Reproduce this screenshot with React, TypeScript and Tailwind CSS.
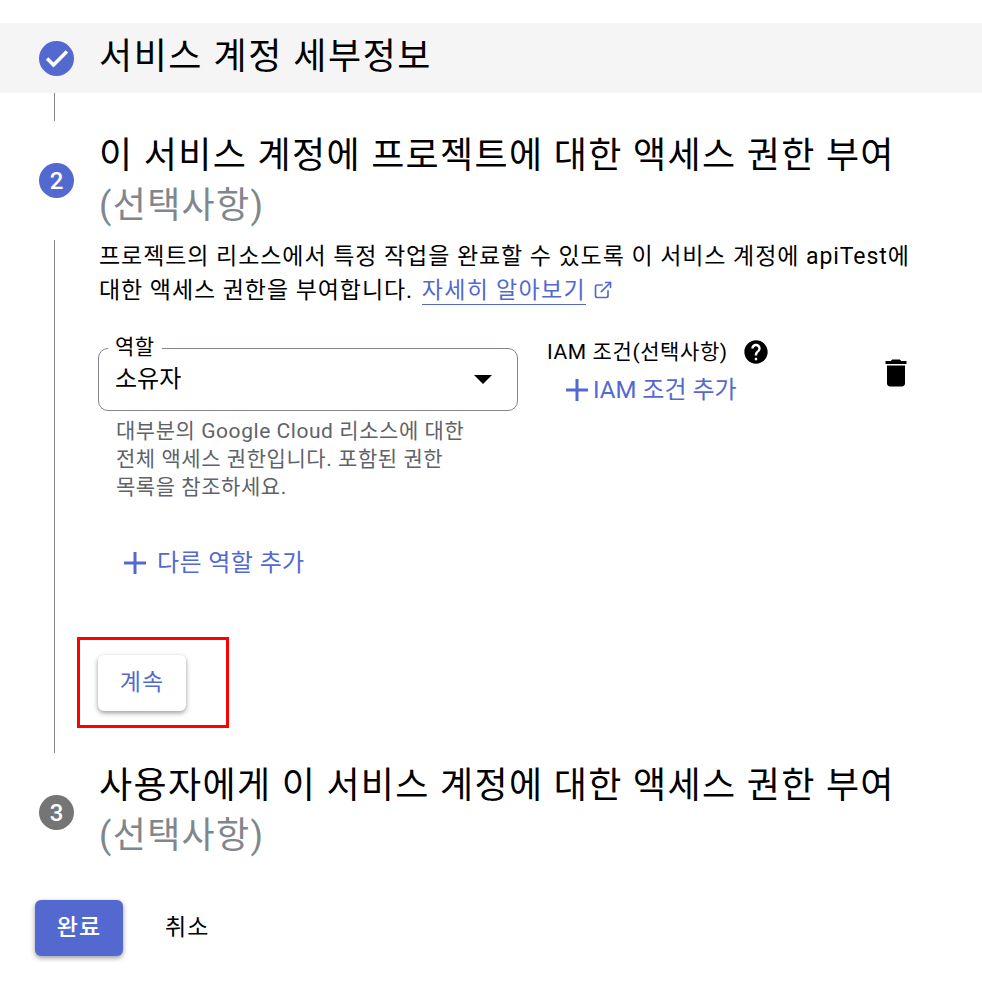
import { ExternalLink } from "lucide-react"

const FONT = "font-['Roboto','Noto_Sans_CJK_KR',sans-serif]"

function StepTitle({ title, optional, className = "" }: { title: string; optional?: boolean; className?: string }) {
  return (
    <div className={`text-[36px] leading-[50px] tracking-[1.35px] text-black ${className}`}>
      <div>{title}</div>
      {optional && <div className="text-[#80868b]">(선택사항)</div>}
    </div>
  )
}

function StepBadge({ color, children }: { color: string; children: React.ReactNode }) {
  return (
    <div className={`w-[35px] h-[35px] rounded-full flex items-center justify-center shrink-0 text-white text-[24px] font-medium ${color}`}>
      {children}
    </div>
  )
}

function PlusIcon({ className }: { className: string }) {
  return (
    <svg className={className} viewBox="0 0 24 24" fill="currentColor">
      <path d="M10.5 1h3v9.5H23v3h-9.5V23h-3v-9.5H1v-3h9.5z" />
    </svg>
  )
}

export default function App() {
  return (
    <div className={`w-[982px] h-[987px] overflow-hidden bg-white pt-[23px] ${FONT}`}>
      {/* Step 1 */}
      <div className="h-[70px] bg-[#f5f5f5] flex items-center pl-[39px] gap-[25px]">
        <StepBadge color="bg-[#5369d0]">
          <svg className="w-[28px] h-[28px]" viewBox="0 0 24 24" fill="none" stroke="white" strokeWidth="3">
            <path d="M3.5 12.5l5.5 5.5L20.5 6.5" />
          </svg>
        </StepBadge>
        <StepTitle title="서비스 계정 세부정보" className="-translate-y-[1px] tracking-[1.55px]" />
      </div>
      <div className="ml-[54px] w-px h-[28px] bg-[#80868b]" />

      {/* Step 2 */}
      <div className="flex items-center pl-[39px] gap-[25px] h-[119px]">
        <StepBadge color="bg-[#5369d0]">2</StepBadge>
        <StepTitle title="이 서비스 계정에 프로젝트에 대한 액세스 권한 부여" optional />
      </div>

      <div className="ml-[54px] border-l border-[#80868b] pl-[44px] h-[513px]">
        <p className="text-[23px] leading-[34px] tracking-[0.93px] text-black w-[830px]">
          프로젝트의 리소스에서 특정 작업을 완료할 수 있도록 이 서비스 계정에 apiTest에 대한 액세스 권한을 부여합니다.{" "}
          <a className="ml-[2px] text-[#5369d0] border-b border-[#5369d0] tracking-[1.3px]">자세히 알아보기</a>
          <ExternalLink className="inline-block w-[20px] h-[20px] ml-[7px] text-[#5369d0] align-[-2px]" />
        </p>

        <div className="flex mt-[40px]">
          <div className="w-[420px] -ml-[1px]">
            <div className="relative h-[63px] border border-[#80868b] rounded-[10px] flex items-center justify-between pl-[16px] pr-[25px]">
              <span className="absolute -top-[14px] left-[9px] bg-white px-[7px] text-[21px] leading-[24px] tracking-[0.5px] text-black">역할</span>
              <span className="text-[24px] leading-[30px] text-black -translate-y-[1px]">소유자</span>
              <div className="w-0 h-0 border-x-[9px] border-x-transparent border-t-[9px] border-t-black" />
            </div>
            <p className="mt-[6px] ml-[18px] w-[360px] break-keep text-[21px] leading-[28px] tracking-[0.55px] text-[#5f6368]">
              대부분의 Google Cloud 리소스에 대한 전체 액세스 권한입니다. 포함된 권한 목록을 참조하세요.
            </p>
          </div>

          <div className="ml-[29px] w-[300px] -mt-[10px]">
            <div className="flex items-center gap-[14px] text-[21px] leading-[24px] tracking-[0.6px] text-black">
              IAM 조건(선택사항)
              <svg className="w-[28px] h-[28px]" viewBox="0 0 24 24" fill="black">
                <path d="M12 2C6.48 2 2 6.48 2 12s4.48 10 10 10 10-4.48 10-10S17.52 2 12 2zm1 17h-2v-2h2v2zm2.07-7.75l-.9.92C13.45 12.9 13 13.5 13 15h-2v-.5c0-1.1.45-2.1 1.17-2.83l1.24-1.26c.37-.36.59-.86.59-1.41 0-1.1-.9-2-2-2s-2 .9-2 2H8c0-2.21 1.79-4 4-4s4 1.79 4 4c0 .88-.36 1.68-.93 2.25z" />
              </svg>
            </div>
            <div className="flex items-center gap-[4px] ml-[18px] mt-[9px] text-[#5369d0] text-[24px] leading-[30px]">
              <PlusIcon className="w-[24px] h-[24px]" />
              <span>IAM 조건 추가</span>
            </div>
          </div>

          <svg className="w-[36px] h-[36px] ml-[31px] mt-[7px]" viewBox="0 0 24 24" fill="black">
            <path d="M6 19c0 1.1.9 2 2 2h8c1.1 0 2-.9 2-2V7H6v12zM19 4h-3.5l-1-1h-5l-1 1H5v2h14V4z" />
          </svg>
        </div>

        <div className="flex items-center gap-[10px] ml-[24px] mt-[47px] text-[#5369d0] text-[24px] leading-[30px] tracking-[0.4px]">
          <PlusIcon className="w-[24px] h-[24px]" />
          <span>다른 역할 추가</span>
        </div>

        <div className="mt-[59px] -ml-[22px] w-[152px] h-[91px] border-[3px] border-[#ff0000] pl-[18px] pt-[15px]">
          <button className="w-[88px] h-[56px] bg-white rounded-[6px] text-[#5369d0] text-[23px] tracking-[1px] shadow-[0_2px_5px_rgba(0,0,0,0.4)]">계속</button>
        </div>
      </div>

      {/* Step 3 */}
      <div className="flex items-center pl-[39px] gap-[25px] h-[119px]">
        <StepBadge color="bg-[#757575]">3</StepBadge>
        <StepTitle title="사용자에게 이 서비스 계정에 대한 액세스 권한 부여" optional className="mb-[4px]" />
      </div>

      <div className="flex items-center ml-[35px] mt-[28px] gap-[42px]">
        <button className="w-[88px] h-[56px] rounded-[6px] bg-[#5369d0] text-white text-[23px] tracking-[1px] font-medium shadow-[0_2px_5px_rgba(0,0,0,0.4)]">완료</button>
        <button className="text-black text-[23px] tracking-[1px]">취소</button>
      </div>
    </div>
  )
}
